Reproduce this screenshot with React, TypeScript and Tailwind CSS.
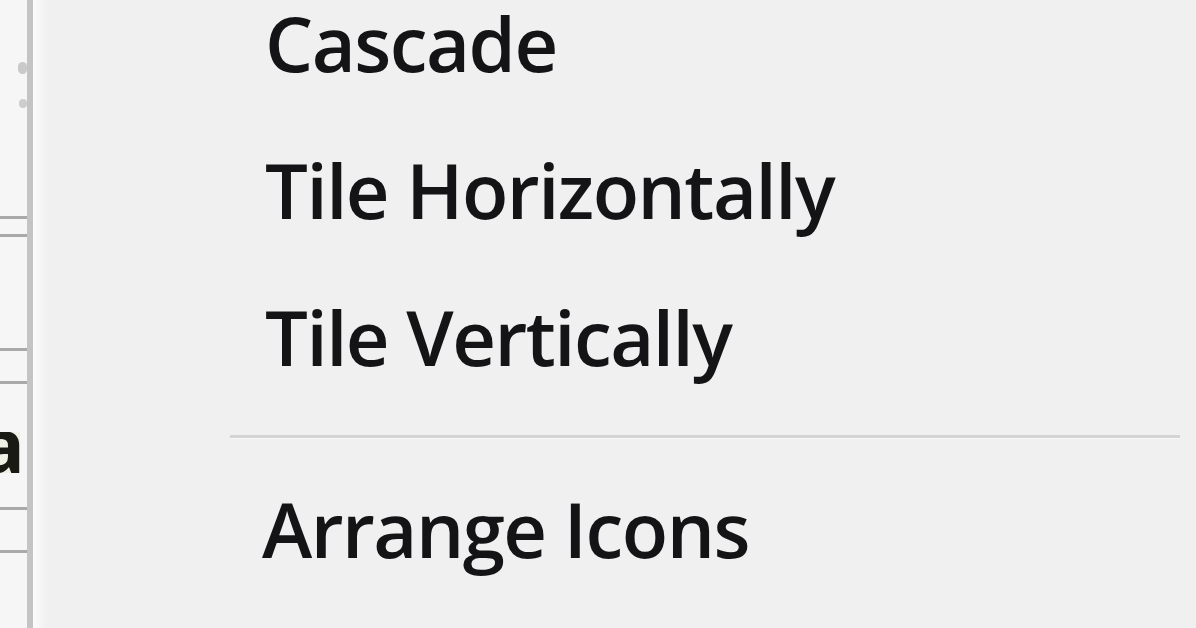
import React from "react";

const font = { fontFamily: '"Open Sans", "Noto Sans", sans-serif' };

function Line() {
  return <div className="h-[3px] w-full bg-[#a9a9a9]" />;
}

export default function App() {
  const items1 = ["Cascade", "Tile Horizontally", "Tile Vertically"];
  return (
    <div
      className="flex w-[1196px] h-[628px] overflow-hidden bg-[#f0f0f0] text-[#141417]"
      style={font}
    >
      {/* background window strip */}
      <div className="flex w-[27px] shrink-0 flex-col bg-[#f6f6f6]">
        <div className="h-[62px]" />
        <div className="flex h-[12px] justify-end">
          <div className="w-[9px] rounded-full bg-[#c9c9c9]" />
        </div>
        <div className="h-[25px]" />
        <div className="flex h-[9px] justify-end">
          <div className="w-[8px] rounded-full bg-[#cdcdcd]" />
        </div>
        <div className="h-[108px]" />
        <Line />
        <div className="h-[15px]" />
        <Line />
        <div className="h-[111px]" />
        <Line />
        <div className="h-[30px]" />
        <Line />
        <div className="h-[48px]" />
        <div className="flex h-[41px] w-[20px] items-end justify-end overflow-hidden bg-[#eef0e4]">
          <span className="mb-[-9px] mr-[-5px] text-[76px] font-bold leading-none text-[#1a1a14]">
            a
          </span>
        </div>
        <div className="h-[34px]" />
        <Line />
        <div className="h-[40px]" />
        <Line />
      </div>
      <div className="w-[6px] shrink-0 bg-[#c4c4c4]" />
      <div className="w-[14px] shrink-0 bg-gradient-to-r from-[#fbfbfb] to-[#f0f0f0]" />

      {/* menu */}
      <div className="flex flex-1 flex-col pt-[5px]">
        <div className="flex flex-col gap-[71px] pl-[218px]">
          {items1.map((t) => (
            <div
              key={t}
              className="h-[76px] text-[76px] font-semibold leading-[76px] tracking-[-1.5px] whitespace-nowrap"
            >
              {t}
            </div>
          ))}
        </div>
        <div className="mt-[60px] ml-[183px] mr-[16px] flex flex-col">
          <div className="h-[3px] bg-[#d4d4d4]" />
          <div className="h-[1px] bg-[#f9f9f9]" />
        </div>
        <div className="mt-[52px] pl-[215px] h-[76px] text-[76px] font-semibold leading-[76px] tracking-[-1.5px] whitespace-nowrap">
          Arrange Icons
        </div>
      </div>
    </div>
  );
}
